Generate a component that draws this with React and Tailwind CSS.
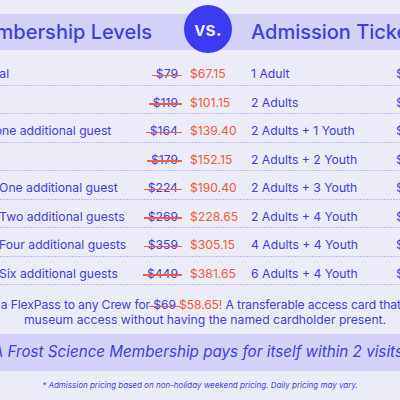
const rows = [
  { label: "Individual", was: "$79", now: "$67.15", adm: "1 Adult", admPrice: "$34.95" },
  { label: "Dual", was: "$119", now: "$101.15", adm: "2 Adults", admPrice: "$69.90" },
  { label: "Dual + one additional guest", was: "$164", now: "$139.40", adm: "2 Adults + 1 Youth", admPrice: "$99.85" },
  { label: "Crew", was: "$179", now: "$152.15", adm: "2 Adults + 2 Youth", admPrice: "$129.80" },
  { label: "Crew + One additional guest", was: "$224", now: "$190.40", adm: "2 Adults + 3 Youth", admPrice: "$159.75" },
  { label: "Crew + Two additional guests", was: "$269", now: "$228.65", adm: "2 Adults + 4 Youth", admPrice: "$189.70" },
  { label: "Crew + Four additional guests", was: "$359", now: "$305.15", adm: "4 Adults + 4 Youth", admPrice: "$259.60" },
  { label: "Crew + Six additional guests", was: "$449", now: "$381.65", adm: "6 Adults + 4 Youth", admPrice: "$329.50" },
];

function Struck({ children }) {
  return (
    <span className="relative inline-block">
      {children}
      <span className="absolute left-[-4px] right-[-4px] top-[52%] h-[1.5px] bg-[#f25c3f]" />
    </span>
  );
}

export default function App() {
  return (
    <div
      className="w-[400px] h-[400px] overflow-hidden bg-[#ecebf8] text-[#3f3fdc]"
      style={{ fontFamily: "Inter, 'Liberation Sans', sans-serif" }}
    >
      {/* header band */}
      <div className="mt-[14px] h-[36px] bg-[#d3d1f7] flex items-center">
        <div className="-ml-[45px] flex items-center whitespace-nowrap">
          <div className="w-[197px] text-right text-[20px] font-medium leading-none">
            Membership Levels
          </div>
          <div className="ml-[32px] w-[48px] h-[48px] shrink-0 rounded-full bg-[#3b3bf2] flex items-center justify-center relative -top-[3px]">
            <span className="text-[19px] font-semibold text-[#ecebfb] leading-none">vs.</span>
          </div>
          <div className="ml-[19px] text-[20px] font-medium leading-none">Admission Tickets</div>
        </div>
      </div>

      {/* price rows */}
      <div className="mt-[7px]">
        {rows.map((r) => (
          <div
            key={r.label}
            className="h-[28.5px] bg-[linear-gradient(to_right,#8f8ce6_1px,transparent_1px)] bg-[length:3px_1px] bg-repeat-x bg-bottom"
          >
            <div className="-ml-[46px] h-full pt-[6px] grid grid-cols-[186px_42px_69px_145px_80px] items-center whitespace-nowrap text-[12.2px]">
              <div>{r.label}</div>
              <div className="text-right pr-[4px]">
                <Struck>{r.was}</Struck>
              </div>
              <div className="pl-[8px] text-[#f25c3f]">{r.now}</div>
              <div>{r.adm}</div>
              <div>{r.admPrice}</div>
            </div>
          </div>
        ))}
      </div>

      {/* flexpass note */}
      <div className="mt-[13px] flex flex-col items-center text-[12.2px] leading-[14.5px] whitespace-nowrap">
        <div className="ml-[14px] tracking-[-0.15px]">
          Add a FlexPass to any Crew for <Struck>$69</Struck>{" "}
          <span className="text-[#f25c3f]">$58.65!</span> A transferable access card that allows
        </div>
        <div className="ml-[10px]">museum access without having the named cardholder present.</div>
      </div>

      {/* bottom band */}
      <div className="mt-[7px] h-[37px] bg-[#d3d1f7] flex items-center justify-center">
        <span className="text-[15.2px] italic whitespace-nowrap">
          A Frost Science Membership pays for itself within 2 visits!
        </span>
      </div>

      <div className="mt-[8px] text-center text-[8px] italic whitespace-nowrap">
        * Admission pricing based on non-holiday weekend pricing. Daily pricing may vary.
      </div>
    </div>
  );
}
